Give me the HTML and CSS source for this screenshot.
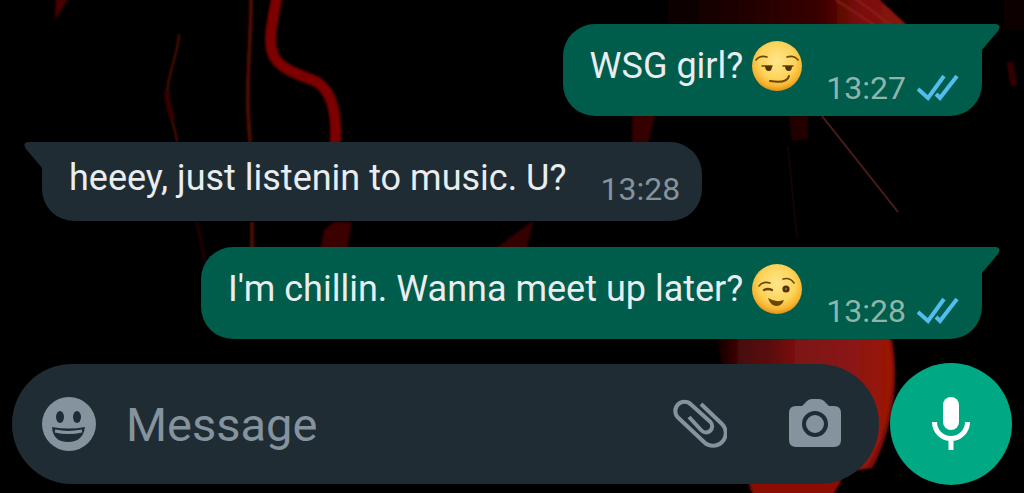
FILE: index.html
```html
<!DOCTYPE html>
<html lang="en">
  <head>
    <meta charset="UTF-8" />
    <meta name="viewport" content="width=device-width, initial-scale=1.0" />
    <title>Chat</title>
    <link rel="stylesheet" href="styles.css">
  </head>
  <body>
    <svg class="wallpaper" viewBox="0 0 1024 493" preserveAspectRatio="xMidYMid slice" aria-hidden="true">
      <defs>
        <linearGradient id="petal" x1="0" x2="1">
          <stop offset="0" stop-color="#0c0000" />
          <stop offset="0.15" stop-color="#4a0808" />
          <stop offset="0.3" stop-color="#5a0a0a" />
          <stop offset="0.45" stop-color="#7c1212" />
          <stop offset="0.75" stop-color="#8a1616" />
          <stop offset="1" stop-color="#9c1400" />
        </linearGradient>
        <linearGradient id="petal-top" x1="0" x2="1">
          <stop offset="0" stop-color="#000" />
          <stop offset="0.3" stop-color="#1c0000" />
          <stop offset="0.65" stop-color="#380202" />
          <stop offset="0.8" stop-color="#780c08" />
          <stop offset="1" stop-color="#8c1812" />
        </linearGradient>
        <filter id="soft"><feGaussianBlur stdDeviation="1.2" /></filter>
      </defs>
      <g filter="url(#soft)" fill="none">
        <path d="M56 -4h14L55 20z" fill="#4a0000" />
        <path d="M179 34c-1 22-12 40-12 62 0 16 8 28 10 46" stroke="#3a0804" stroke-width="3" />
        <path d="M167 90c0 14 3 20 6 30" stroke="#3a0300" stroke-width="5" />
        <path d="M251 -4c0 44-4 74-3 114l2 32M252 222v28" stroke="#4c0a06" stroke-width="4" />
        <path d="M277 -4c-4 24-11 48-2 62 9 14 30 18 42 24 18 12 20 40 18 64" stroke="#7c0000" stroke-width="11" />
        <path d="M197 222l8 40" stroke="#260000" stroke-width="3" />
        <path d="M324 230l10-8h18l-5 28h-27z" fill="#3a0000" />
        <path d="M632 112h24l-8 32h-16zM494 250l18-14 22-16-8 30z" fill="#340000" />
        <path d="M788 112h20v27l-16 2z" fill="#240000" />
        <path d="M650 -4h226l34 32H650z" fill="url(#petal-top)" />
        <path d="M852 -4l40 30M836 0l40 26" stroke="#8c221a" stroke-width="2" />
        <path d="M1004 0h24v30h-24z" fill="#0e0000" />
        <path d="M1010 62l4 24" stroke="#300404" stroke-width="7" />
        <path d="M716 338h174c10 40 4 90-18 130l-14 2-100 28-8-8z" fill="url(#petal)" />
        <path d="M750 480h92l-12 20h-76z" fill="#8c0a04" />
        <path d="M891 340c8 46-2 96-23 128" stroke="#7a1008" stroke-width="3" />
      </g>
      <path d="M822 116l46 58 30 38" fill="none" stroke="#4a1c1a" stroke-width="2" />
      <path d="M788 146l9 92" fill="none" stroke="#100404" stroke-width="2" />
    </svg>

    <main class="chat">
      <div class="bubble sent">
        <svg class="tail" viewBox="0 0 19 30" aria-hidden="true"><path d="M0 0h15q6 1 2 7L1 26v4H0z" /></svg>
        <p class="text">WSG girl?
          <svg class="emoji" viewBox="0 0 50 50" role="img" aria-label="smirk">
            <defs>
              <radialGradient id="face" cx="0.5" cy="0.4" r="0.6">
                <stop offset="0" stop-color="#ffe68c" />
                <stop offset="0.6" stop-color="#fdd45a" />
                <stop offset="0.85" stop-color="#f7b530" />
                <stop offset="1" stop-color="#e09018" />
              </radialGradient>
            </defs>
            <circle cx="25" cy="25" r="25" fill="url(#face)" />
            <g fill="none" stroke="#6b4408" stroke-width="1.6" stroke-linecap="round">
              <path d="M4 19q4-5 11-3M35 16q7-2 11 3" />
              <path d="M18 40q17 3 19-5" stroke-width="2" />
              <path d="M10 25h10M31 25h10" />
            </g>
            <path d="M13 25h7q0 5-3 5-4 0-4-5zM33 25h7q0 5-3 5-4 0-4-5z" fill="#503204" />
          </svg>
        </p>
        <time class="time">13:27</time>
        <svg class="ticks" viewBox="0 0 42 27" role="img" aria-label="read"><path d="M1 15l10 9L27 2M19 20l4 4L40 2" /></svg>
      </div>

      <div class="bubble received">
        <svg class="tail" viewBox="0 0 19 30" aria-hidden="true"><path d="M19 0H4q-6 1-2 7l16 19v4h1z" /></svg>
        <p class="text">heeey, just listenin to music. U?</p>
        <time class="time">13:28</time>
      </div>

      <div class="bubble sent">
        <svg class="tail" viewBox="0 0 19 30" aria-hidden="true"><path d="M0 0h15q6 1 2 7L1 26v4H0z" /></svg>
        <p class="text">I'm chillin. Wanna meet up later?
          <svg class="emoji" viewBox="0 0 50 50" role="img" aria-label="wink">
            <circle cx="25" cy="25" r="25" fill="url(#face)" />
            <g fill="none" stroke="#6b4408" stroke-width="1.6" stroke-linecap="round">
              <path d="M7 22q4-5 11-3M31 15q7-2 11 4" />
              <path d="M12 26q4-2 8 0" stroke-width="2.4" />
            </g>
            <path d="M16 34q8 5 16 2-2 6-8 6-6-1-8-8z" fill="#6b4408" />
            <circle cx="34" cy="25" r="3.6" fill="#503204" />
            <circle cx="34" cy="25" r="1" fill="#a8782c" />
          </svg>
        </p>
        <time class="time">13:28</time>
        <svg class="ticks" viewBox="0 0 42 27" role="img" aria-label="read"><path d="M1 15l10 9L27 2M19 20l4 4L40 2" /></svg>
      </div>
    </main>

    <form class="composer">
      <div class="field">
        <button type="button" class="icon" aria-label="Emoji">
          <svg viewBox="0 0 54 54">
            <circle cx="27" cy="27" r="27" fill="#84939d" />
            <g fill="#1f2c34">
              <ellipse cx="18" cy="20" rx="4" ry="6" />
              <ellipse cx="35" cy="20" rx="4" ry="6" />
              <path d="M10 30q17 3 33 0-2 15-17 15T10 30z" />
            </g>
            <path d="M13 34q13 3 27 0" fill="none" stroke="#84939d" stroke-width="3" />
          </svg>
        </button>
        <input class="message" type="text" placeholder="Message" aria-label="Message">
        <button type="button" class="icon" aria-label="Attach">
          <svg viewBox="0 0 54 54">
            <path d="M28 7l21 20a12.7 12.7 0 0 1-18 18L5 20.500A9 9 0 0 1 18 7.500L37.500 25a6 6 0 0 1-9 8.500L16 20" fill="none" stroke="#84939d" stroke-width="4" />
          </svg>
        </button>
        <button type="button" class="icon" aria-label="Camera">
          <svg viewBox="0 0 54 54">
            <path d="M8 9h6l5-5q2-2 5-2h7q3 0 5 2l5 5h5q7 0 7 7v27q0 7-7 7H8q-7 0-7-7V16q0-7 7-7z" fill="#84939d" />
            <circle cx="27" cy="27" r="11" fill="none" stroke="#1f2c34" stroke-width="4" />
          </svg>
        </button>
      </div>
      <button type="button" class="mic" aria-label="Record voice message">
        <svg viewBox="0 0 40 54">
          <rect x="12" y="0" width="16" height="33" rx="8" fill="#fff" />
          <path d="M3.500 25a16.500 16.500 0 0 0 33 0M20 41v12" fill="none" stroke="#fff" stroke-width="5" />
        </svg>
      </button>
    </form>
  </body>
</html>
```
FILE: styles.css
```css
* {
  box-sizing: border-box;
}
body {
  display: flex;
  flex-direction: column;
  min-height: 100vh;
  margin: 0;
  background: #000;
  font-family: Roboto, sans-serif;
}
.wallpaper {
  position: absolute;
  inset: 0;
  z-index: -1;
  width: 100%;
  height: 100%;
}
.chat {
  display: flex;
  flex: 1;
  flex-direction: column;
  gap: 26px;
  padding: 24px 42px 22px;
}
.bubble {
  position: relative;
  display: flex;
  align-items: flex-end;
  border-radius: 32px;
  color: #e9edef;
}
.sent {
  align-self: flex-end;
  padding: 17px 23px 10px 27px;
  border-top-right-radius: 0;
  background: #005c4b;
  fill: #005c4b;
}
.received {
  align-self: flex-start;
  padding: 12px 22px 14px 27px;
  border-top-left-radius: 0;
  background: #1f2c34;
  fill: #1f2c34;
}
.tail {
  position: absolute;
  top: 0;
  width: 19px;
  height: 30px;
}
.sent .tail {
  left: 100%;
  margin-left: -1px;
}
.received .tail {
  right: 100%;
  margin-right: -1px;
}
.text {
  display: flex;
  gap: 9px;
  align-items: center;
  margin: 0;
  padding-bottom: 5px;
  font-size: 36px;
  line-height: 48px;
}
.sent .text {
  padding-bottom: 15px;
}
.emoji {
  flex: none;
  width: 50px;
  height: 50px;
}
.time {
  margin-left: 24px;
  font-size: 32px;
  line-height: 36px;
  color: #8fb5ad;
}
.received .time {
  margin-left: 34px;
  color: #84939d;
}
.ticks {
  flex: none;
  width: 42px;
  height: 27px;
  margin: 0 0 5px 11px;
  fill: none;
  stroke: #53bdeb;
  stroke-width: 4;
}
.composer {
  display: flex;
  gap: 11px;
  align-items: center;
  padding: 0 12px 8px;
}
.field {
  display: flex;
  flex: 1;
  align-items: center;
  min-width: 0;
  height: 120px;
  padding: 0 37px 0 30px;
  border-radius: 60px;
  background: #1f2c34;
}
button {
  display: flex;
  flex: none;
  align-items: center;
  justify-content: center;
  padding: 0;
  border: 0;
  background: none;
  cursor: pointer;
}
.icon svg {
  width: 54px;
  height: 54px;
}
.icon + .icon {
  margin-left: 61px;
}
.message {
  flex: 1;
  min-width: 0;
  padding: 0 30px;
  border: 0;
  outline: 0;
  background: none;
  font: 47px Roboto, sans-serif;
  color: #e9edef;
}
.message::placeholder {
  color: #84939d;
}
.mic {
  width: 122px;
  height: 122px;
  border-radius: 50%;
  background: #00a884;
}
.mic svg {
  width: 40px;
  height: 54px;
}
```
